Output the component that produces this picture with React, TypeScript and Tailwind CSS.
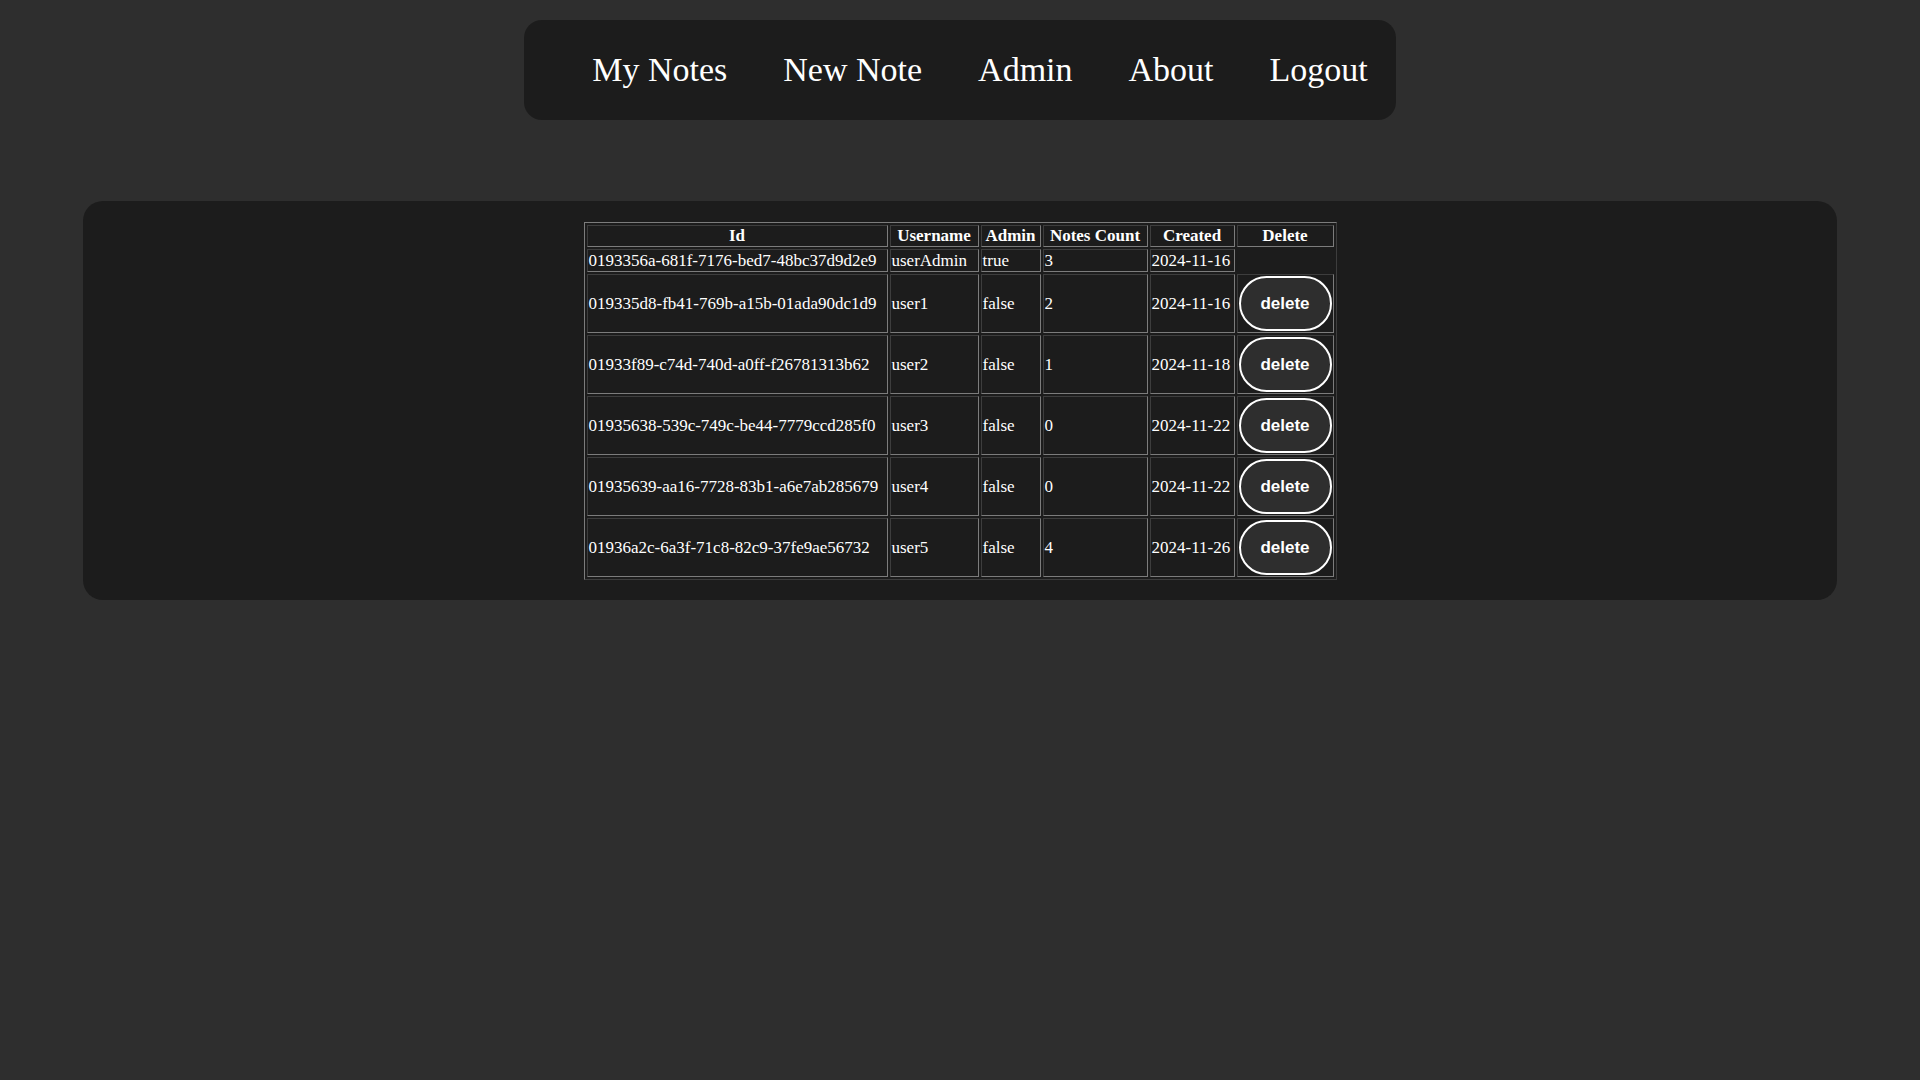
import React from 'react';

interface User {
  id: string;
  username: string;
  admin: boolean;
  notesCount: number;
  created: string;
}

const users: User[] = [
  { id: '0193356a-681f-7176-bed7-48bc37d9d2e9', username: 'userAdmin', admin: true, notesCount: 3, created: '2024-11-16' },
  { id: '019335d8-fb41-769b-a15b-01ada90dc1d9', username: 'user1', admin: false, notesCount: 2, created: '2024-11-16' },
  { id: '01933f89-c74d-740d-a0ff-f26781313b62', username: 'user2', admin: false, notesCount: 1, created: '2024-11-18' },
  { id: '01935638-539c-749c-be44-7779ccd285f0', username: 'user3', admin: false, notesCount: 0, created: '2024-11-22' },
  { id: '01935639-aa16-7728-83b1-a6e7ab285679', username: 'user4', admin: false, notesCount: 0, created: '2024-11-22' },
  { id: '01936a2c-6a3f-71c8-82c9-37fe9ae56732', username: 'user5', admin: false, notesCount: 4, created: '2024-11-26' },
];

const links = ['My Notes', 'New Note', 'Admin', 'About', 'Logout'];

// inset cell border like a plain <table border="1">
const cell =
  'border border-t-[#3d3d3d] border-l-[#3d3d3d] border-b-[#7c7c7c] border-r-[#7c7c7c] p-[1px] text-left align-middle';
const head =
  'border border-t-[#3d3d3d] border-l-[#3d3d3d] border-b-[#7c7c7c] border-r-[#7c7c7c] p-[1px] h-[22px] text-center font-bold';

export default function App() {
  return (
    <div className="min-h-[1080px] bg-[#2e2e2e] text-white font-['Liberation_Serif',serif] pt-[20px]">
      {/* Nav */}
      <nav className="mx-auto w-fit h-[100px] rounded-[18px] bg-[#1c1c1c] flex items-center pl-[40px]">
        {links.map(link => (
          <a key={link} href="#" className="px-[28px] text-[34px] leading-[40px] text-white">
            {link}
          </a>
        ))}
      </nav>

      {/* Users */}
      <main className="mt-[81px] mx-[83px] rounded-[20px] bg-[#1c1c1c] pt-[21px] pb-[20px] px-[20px]">
        <table className="mx-auto border-separate border-spacing-[2px] border border-t-[#7c7c7c] border-l-[#7c7c7c] border-b-[#3d3d3d] border-r-[#3d3d3d] text-[17px] leading-[18px]">
          <thead>
            <tr>
              <th className={`${head} w-[301px]`}>Id</th>
              <th className={`${head} w-[89px]`}>Username</th>
              <th className={`${head} w-[60px]`}>Admin</th>
              <th className={`${head} w-[105px]`}>Notes Count</th>
              <th className={`${head} w-[85px]`}>Created</th>
              <th className={`${head} w-[96px]`}>Delete</th>
            </tr>
          </thead>
          <tbody>
            {users.map(user => (
              <tr key={user.id}>
                <td className={`${cell} ${user.admin ? 'h-[23px]' : 'h-[59px]'}`}>{user.id}</td>
                <td className={cell}>{user.username}</td>
                <td className={cell}>{String(user.admin)}</td>
                <td className={cell}>{user.notesCount}</td>
                <td className={cell}>{user.created}</td>
                {!user.admin && (
                  <td className={cell}>
                    <button className="block h-[55px] w-[93px] rounded-full border-2 border-white bg-[#2e2e2e] text-white font-['Liberation_Sans',sans-serif] font-bold text-[17px]">
                      delete
                    </button>
                  </td>
                )}
              </tr>
            ))}
          </tbody>
        </table>
      </main>
    </div>
  );
}
